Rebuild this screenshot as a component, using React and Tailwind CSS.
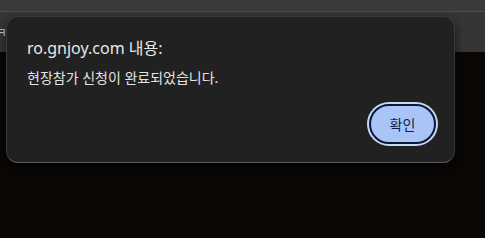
export default function App() {
  return (
    <div
      className="relative w-[485px] h-[238px] overflow-hidden bg-[#0a0705]"
      style={{ fontFamily: '"Noto Sans", "Noto Sans CJK KR", sans-serif' }}
    >
      {/* browser chrome behind the dialog */}
      <div className="h-[12px] bg-[#3b3b3b] border-b border-[#4c4c4c]" />
      <div className="h-[40px] bg-[#353535] flex items-center">
        <span className="-ml-[5px] text-[13px] text-[#cfcfcf] leading-none">ㅋ</span>
      </div>

      {/* alert dialog */}
      <div className="absolute left-[6px] top-[16px] w-[449px] h-[147px] rounded-[12px] bg-[#212121] border border-[#3a3a3a] border-b-[#5a5a5a] shadow-[0_4px_10px_rgba(0,0,0,0.6)] flex flex-col pl-[20px] pr-[16px] pt-[20px] pb-[16px]">
        <h1 className="text-[16px] leading-[22px] text-[#e8e8e8]">ro.gnjoy.com 내용:</h1>
        <p className="mt-[10px] text-[14px] leading-[18px] text-[#e3e3e3]">현장참가 신청이 완료되었습니다.</p>
        <div className="mt-auto flex justify-end">
          <button className="w-[67px] h-[40px] m-[2px] rounded-full bg-[#a9c5f7] border-2 border-[#0a1736] shadow-[0_0_0_2px_#c6d8f7] text-[14px] text-[#0a1f52]">
            확인
          </button>
        </div>
      </div>
    </div>
  );
}
